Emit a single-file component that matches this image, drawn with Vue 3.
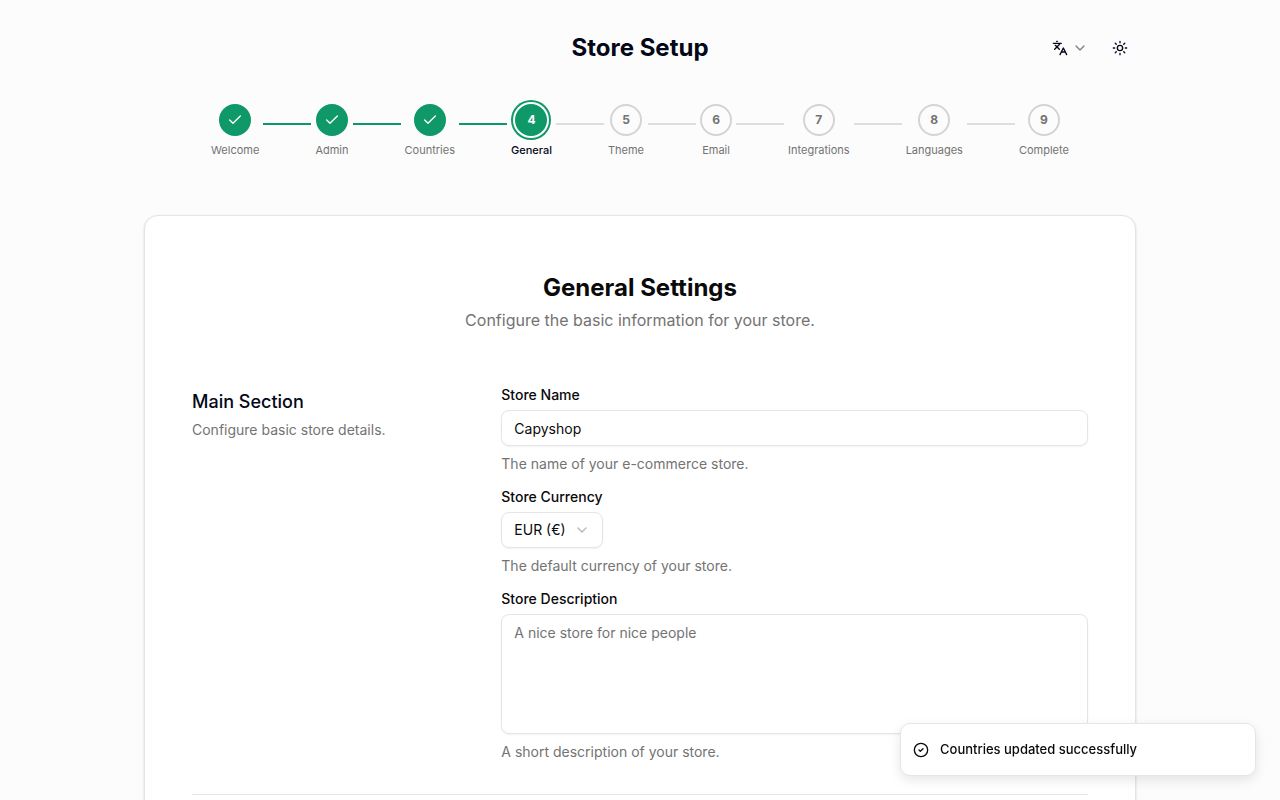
<script setup>
import { ref } from 'vue'

const steps = ['Welcome', 'Admin', 'Countries', 'General', 'Theme', 'Email', 'Integrations', 'Languages', 'Complete']
const current = 3
const storeName = ref('Capyshop')
const currency = ref('EUR')
const description = ref('')
</script>

<template>
  <div class="page">
    <header class="header">
      <h1 class="title">Store Setup</h1>
      <div class="actions">
        <button type="button" class="ghost" aria-label="Change language">
          <svg class="icon" viewBox="0 0 24 24" aria-hidden="true">
            <path d="m5 8 6 6M4 14l6-6 2-3M2 5h12M7 2h1M22 22l-5-10-5 10M14 18h6" />
          </svg>
          <svg class="icon faded" viewBox="0 0 24 24" aria-hidden="true"><path d="m6 9 6 6 6-6" /></svg>
        </button>
        <button type="button" class="ghost" aria-label="Toggle theme">
          <svg class="icon" viewBox="0 0 24 24" aria-hidden="true">
            <circle cx="12" cy="12" r="4" />
            <path d="M12 2v2M12 20v2M4.93 4.93l1.41 1.41M17.66 17.66l1.41 1.41M2 12h2M20 12h2M6.34 17.66l-1.41 1.41M19.07 4.93l-1.41 1.41" />
          </svg>
        </button>
      </div>
    </header>

    <nav class="stepper" aria-label="Setup progress">
      <template v-for="(step, i) in steps" :key="step">
        <span v-if="i > 0" class="line" :class="{ reached: i <= current }"></span>
        <div class="step" :class="{ done: i < current, active: i === current }" :aria-current="i === current ? 'step' : undefined">
          <span class="dot">
            <svg v-if="i < current" class="icon" viewBox="0 0 24 24" aria-hidden="true"><path d="M20 6 9 17l-5-5" /></svg>
            <template v-else>{{ i + 1 }}</template>
          </span>
          <span class="step-label">{{ step }}</span>
        </div>
      </template>
    </nav>

    <main class="card">
      <div class="content">
        <div class="intro">
          <h2>General Settings</h2>
          <p>Configure the basic information for your store.</p>
        </div>

        <form class="section" @submit.prevent>
          <div class="about">
            <h3>Main Section</h3>
            <p>Configure basic store details.</p>
          </div>
          <div class="fields">
            <div class="field">
              <label for="store-name">Store Name</label>
              <input id="store-name" v-model="storeName" class="control" type="text" />
              <p>The name of your e-commerce store.</p>
            </div>
            <div class="field">
              <label for="store-currency">Store Currency</label>
              <div class="select">
                <select id="store-currency" v-model="currency" class="control">
                  <option value="EUR">EUR (€)</option>
                </select>
                <svg class="icon faded" viewBox="0 0 24 24" aria-hidden="true"><path d="m6 9 6 6 6-6" /></svg>
              </div>
              <p>The default currency of your store.</p>
            </div>
            <div class="field">
              <label for="store-description">Store Description</label>
              <textarea id="store-description" v-model="description" class="control" placeholder="A nice store for nice people"></textarea>
              <p>A short description of your store.</p>
            </div>
          </div>
        </form>
      </div>
    </main>

    <div class="toast" role="status">
      <svg class="icon" viewBox="0 0 24 24" aria-hidden="true"><circle cx="12" cy="12" r="10" /><path d="m9 12 2 2 4-4" /></svg>
      <span>Countries updated successfully</span>
    </div>
  </div>
</template>

<style>
body {
  background: #fcfcfc;
}
</style>

<style scoped>
.page,
.page * {
  box-sizing: border-box;
}

.page {
  max-width: 1024px;
  margin: 0 auto;
  padding: 28px 16px 32px;
  font-family: Inter, "Liberation Sans", sans-serif;
  font-size: 14px;
  line-height: 20px;
  color: #0a0a0a;
}

h1, h2, h3, p {
  margin: 0;
}

.header {
  display: grid;
  grid-template-columns: 1fr auto 1fr;
  align-items: center;
}

.title {
  grid-column: 2;
  font-size: 24px;
  line-height: 32px;
  font-weight: 700;
  color: #030718;
}

.actions {
  display: flex;
  justify-content: flex-end;
  gap: 8px;
}

.ghost {
  display: flex;
  align-items: center;
  gap: 4px;
  height: 40px;
  padding: 0 8px;
  border: 0;
  background: transparent;
  color: #030718;
}

.icon {
  width: 16px;
  height: 16px;
  flex: none;
  fill: none;
  stroke: currentColor;
  stroke-width: 2;
  stroke-linecap: round;
  stroke-linejoin: round;
}

.stepper {
  display: flex;
  justify-content: center;
  gap: 4px;
  margin-top: 36px;
}

.step {
  display: flex;
  flex-direction: column;
  align-items: center;
  gap: 6px;
  color: #737373;
}

.dot {
  display: flex;
  align-items: center;
  justify-content: center;
  width: 32px;
  height: 32px;
  border: 2px solid #d4d4d4;
  border-radius: 50%;
  font-size: 12px;
  line-height: 16px;
  font-weight: 700;
}

.step-label {
  font-size: 11px;
  line-height: 16px;
}

.done .dot,
.active .dot {
  border-color: #0f9868;
  background: #0f9868;
  color: #fff;
}

.active .dot {
  box-shadow: 0 0 0 2px #fff, 0 0 0 4px #0f9868;
}

.active .step-label {
  color: #030718;
  font-weight: 500;
}

.line {
  width: 48px;
  height: 2px;
  margin-top: 19px;
  background: #dedede;
}

.line.reached {
  background: #0f9868;
}

.card {
  margin-top: 57px;
  padding: 56px 32px 48px;
  border: 1px solid #e5e5e5;
  border-radius: 14px;
  background: #fff;
  box-shadow: 0 1px 3px rgba(0, 0, 0, 0.1), 0 1px 2px rgba(0, 0, 0, 0.06);
}

.content {
  max-width: 896px;
  margin: 0 auto;
}

.intro {
  text-align: center;
}

.intro h2 {
  font-size: 24px;
  line-height: 32px;
  font-weight: 700;
}

.intro p {
  margin-top: 4px;
  font-size: 16px;
  line-height: 24px;
  color: #737373;
}

.section {
  display: grid;
  grid-template-columns: repeat(3, minmax(0, 1fr));
  gap: 32px;
  margin-top: 56px;
  padding-bottom: 32px;
  border-bottom: 1px solid #e5e5e5;
}

.about h3 {
  font-size: 18px;
  line-height: 28px;
  font-weight: 500;
  color: #030718;
}

.about p {
  margin-top: 4px;
  color: #737373;
}

.fields {
  grid-column: span 2;
  display: grid;
  gap: 16px;
}

.field {
  display: grid;
  gap: 8px;
}

.field label {
  line-height: 14px;
  font-weight: 500;
}

.field p {
  color: #737373;
}

.control {
  width: 100%;
  height: 36px;
  margin: 0;
  padding: 0 12px;
  border: 1px solid #e5e5e5;
  border-radius: 8px;
  background: #fff;
  box-shadow: 0 1px 2px rgba(0, 0, 0, 0.05);
  color: #0a0a0a;
  font: inherit;
  outline: none;
}

textarea.control {
  display: block;
  height: 120px;
  padding: 8px 12px;
  resize: none;
}

textarea::placeholder {
  color: #737373;
  opacity: 1;
}

.select {
  position: relative;
  justify-self: start;
}

.select .control {
  display: block;
  padding-right: 36px;
  appearance: none;
}

.select .icon {
  position: absolute;
  top: 10px;
  right: 13px;
  color: #737373;
  pointer-events: none;
}

.faded {
  opacity: 0.5;
}

.toast {
  position: fixed;
  right: 24px;
  bottom: 24px;
  display: flex;
  align-items: center;
  gap: 11px;
  width: 356px;
  padding: 16px 12px;
  border: 1px solid #e5e5e5;
  border-radius: 10px;
  background: #fff;
  box-shadow: 0 4px 12px rgba(0, 0, 0, 0.1);
  font-size: 13px;
  line-height: 19px;
  font-weight: 500;
}
</style>
